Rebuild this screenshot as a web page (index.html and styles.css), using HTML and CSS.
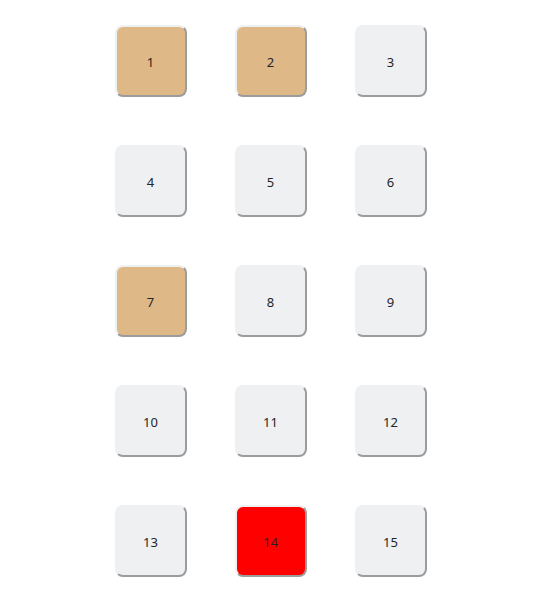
FILE: index.html
```html
<!DOCTYPE html>
<html lang="en">
<head>
<meta charset="utf-8">
<title>Seats</title>
<link rel="stylesheet" href="styles.css">
</head>
<body>
<main class="grid">
<button class="seat picked">1</button>
<button class="seat picked">2</button>
<button class="seat">3</button>
<button class="seat">4</button>
<button class="seat">5</button>
<button class="seat">6</button>
<button class="seat picked">7</button>
<button class="seat">8</button>
<button class="seat">9</button>
<button class="seat">10</button>
<button class="seat">11</button>
<button class="seat">12</button>
<button class="seat">13</button>
<button class="seat wrong">14</button>
<button class="seat">15</button>
</main>
</body>
</html>
```
FILE: styles.css
```css
body {
  margin: 0;
  background: #fff;
}

.grid {
  display: grid;
  grid-template-columns: repeat(3, 72px);
  justify-content: center;
  gap: 48px;
  padding: 25px 11px 34px 0;
}

.seat {
  height: 72px;
  padding: 2px 1px 0 0;
  border: 2px outset #eff0f1;
  border-radius: 8px;
  background: #eff0f1;
  color: #232629;
  font: 13px "Noto Sans", sans-serif;
}

.picked {
  background: burlywood;
}

.wrong {
  background: red;
}
```
